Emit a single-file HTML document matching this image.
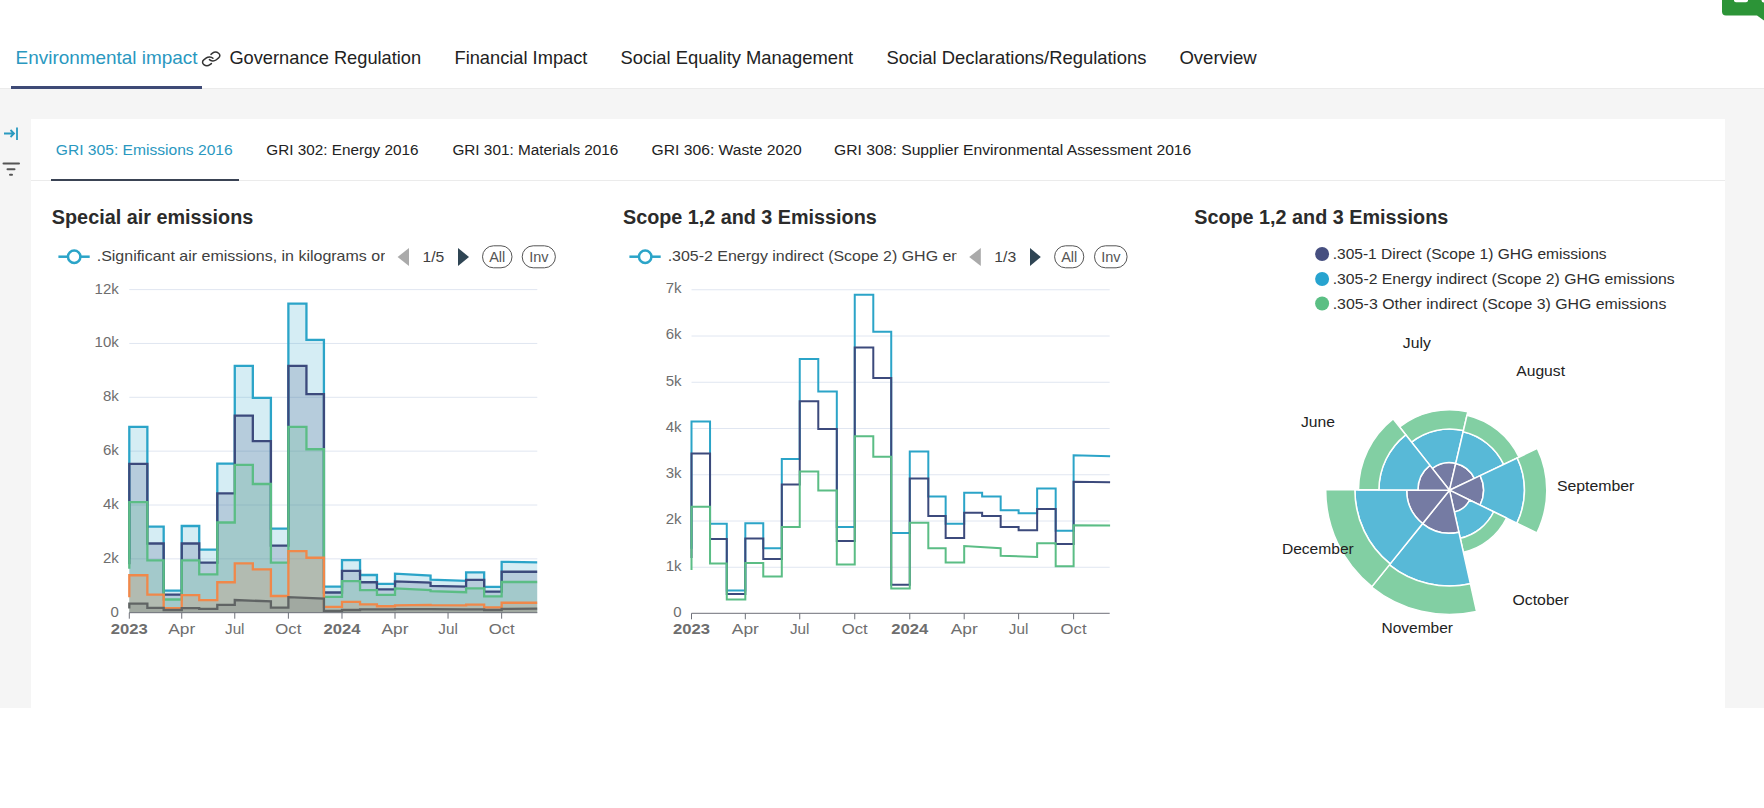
<!DOCTYPE html>
<html><head><meta charset="utf-8"><title>Environmental impact</title>
<style>
html,body{margin:0;padding:0;background:#fff;width:1764px;height:808px;overflow:hidden;}
svg{display:block;font-family:"Liberation Sans",sans-serif;}
.tt{font-size:18.5px;}
.st{font-size:15.5px;}
.ti{font-size:19.5px;font-weight:700;fill:#2b2b2b;}
.lg{font-size:14.5px;fill:#404040;}
.lg3{font-size:15.5px;fill:#2e2e2e;}
.pill{font-size:14.5px;fill:#555;}
.ax{font-size:15.5px;fill:#6e6e6e;}
.axb{font-size:15.5px;fill:#6e6e6e;font-weight:700;}
.ay{font-size:15px;fill:#6e6e6e;}
.pl{font-size:15.5px;fill:#222;}
</style></head>
<body>
<svg width="1764" height="808" viewBox="0 0 1764 808">
<rect x="0" y="88" width="1764" height="620" fill="#f5f5f5"/>
<rect x="0" y="88" width="1764" height="1" fill="#ebebeb"/>
<rect x="31" y="119" width="1694" height="589" fill="#ffffff"/>
<rect x="31" y="180" width="1694" height="1" fill="#ebebeb"/>
<text x="15.6" y="63.7" class="tt" fill="#2a98bf" textLength="182.0" lengthAdjust="spacingAndGlyphs">Environmental impact</text>
<text x="229.4" y="63.7" class="tt" fill="#222" textLength="191.8" lengthAdjust="spacingAndGlyphs">Governance Regulation</text>
<text x="454.5" y="63.7" class="tt" fill="#222" textLength="132.9" lengthAdjust="spacingAndGlyphs">Financial Impact</text>
<text x="620.6" y="63.7" class="tt" fill="#222" textLength="232.6" lengthAdjust="spacingAndGlyphs">Social Equality Management</text>
<text x="886.5" y="63.7" class="tt" fill="#222" textLength="259.9" lengthAdjust="spacingAndGlyphs">Social Declarations/Regulations</text>
<text x="1179.4" y="63.7" class="tt" fill="#222" textLength="77.3" lengthAdjust="spacingAndGlyphs">Overview</text>
<rect x="11" y="86" width="191" height="3" fill="#3e4a76"/>
<g transform="translate(202.5 52.2) scale(0.87 0.675) translate(-2 -2)" fill="none" stroke="#333" stroke-width="1.5" stroke-linecap="round" stroke-linejoin="round"><path vector-effect="non-scaling-stroke" d="M10 13a5 5 0 0 0 7.54.54l3-3a5 5 0 0 0-7.07-7.07l-1.72 1.71"/><path vector-effect="non-scaling-stroke" d="M14 11a5 5 0 0 0-7.54-.54l-3 3a5 5 0 0 0 7.07 7.07l1.71-1.71"/></g>
<text x="55.8" y="154.8" class="st" fill="#2a98bf" textLength="176.9" lengthAdjust="spacingAndGlyphs">GRI 305: Emissions 2016</text>
<text x="266.3" y="154.8" class="st" fill="#222" textLength="152.1" lengthAdjust="spacingAndGlyphs">GRI 302: Energy 2016</text>
<text x="452.4" y="154.8" class="st" fill="#222" textLength="166.0" lengthAdjust="spacingAndGlyphs">GRI 301: Materials 2016</text>
<text x="651.6" y="154.8" class="st" fill="#222" textLength="150.0" lengthAdjust="spacingAndGlyphs">GRI 306: Waste 2020</text>
<text x="834.1" y="154.8" class="st" fill="#222" textLength="357.2" lengthAdjust="spacingAndGlyphs">GRI 308: Supplier Environmental Assessment 2016</text>
<rect x="51" y="179" width="188" height="2" fill="#3a4354"/>
<g stroke="#2a9ac0" stroke-width="1.8" fill="none"><path d="M4 133.5 L14 133.5 M10.5 130 L14 133.5 L10.5 137"/><path d="M17 127.5 L17 140"/></g>
<g stroke="#555" stroke-linecap="round" stroke-width="2"><path d="M3.5 163.5 L19 163.5"/><path d="M7.5 169.2 L14.5 169.2"/><path d="M10 174.8 L12 174.8"/></g>
<path d="M1722 -5 L1764 -5 L1764 20.5 L1757 15.5 L1726 15.5 Q1722 15.5 1722 11.5 Z" fill="#2c9437"/>
<rect x="1734" y="-4" width="14" height="6.2" rx="2" fill="#fff"/>
<rect x="1761.6" y="-4" width="6" height="6.5" rx="2" fill="#fff"/>
<text x="51.8" y="223.6" class="ti" textLength="201.5" lengthAdjust="spacingAndGlyphs">Special air emissions</text>
<text x="623" y="223.6" class="ti" textLength="253.7" lengthAdjust="spacingAndGlyphs">Scope 1,2 and 3 Emissions</text>
<text x="1194.2" y="223.6" class="ti" textLength="254.1" lengthAdjust="spacingAndGlyphs">Scope 1,2 and 3 Emissions</text>
<line x1="58.4" x2="89.7" y1="256.7" y2="256.7" stroke="#2ba4c8" stroke-width="2.5"/>
<circle cx="74.2" cy="256.7" r="6.2" fill="#fff" stroke="#2ba4c8" stroke-width="2.5"/>
<clipPath id="clip1"><rect x="58.4" y="240" width="326.5" height="30"/></clipPath>
<text x="96.7" y="261" class="lg" clip-path="url(#clip1)" textLength="389.2" lengthAdjust="spacingAndGlyphs">.Significant air emissions, in kilograms or metric tonnes</text>
<path d="M409 248 L409 266 L397.6 257 Z" fill="#aaaaaa"/>
<text x="422.5" y="261.5" class="lg" textLength="21.8" lengthAdjust="spacingAndGlyphs">1/5</text>
<path d="M458 248 L458 266 L469 257 Z" fill="#2f4554"/>
<rect x="482.5" y="245.8" width="29.5" height="22" rx="11" fill="none" stroke="#555" stroke-width="1"/>
<text x="497.25" y="262" text-anchor="middle" class="pill">All</text>
<rect x="522.2" y="245.8" width="33.2" height="22" rx="11" fill="none" stroke="#555" stroke-width="1"/>
<text x="538.8" y="262" text-anchor="middle" class="pill">Inv</text>
<line x1="629.4" x2="660.7" y1="256.7" y2="256.7" stroke="#2ba4c8" stroke-width="2.5"/>
<circle cx="645.2" cy="256.7" r="6.2" fill="#fff" stroke="#2ba4c8" stroke-width="2.5"/>
<clipPath id="clip2"><rect x="629.4" y="240" width="327.1" height="30"/></clipPath>
<text x="667.7" y="261" class="lg" clip-path="url(#clip2)" textLength="345.7" lengthAdjust="spacingAndGlyphs">.305-2 Energy indirect (Scope 2) GHG emissions</text>
<path d="M980.8 248 L980.8 266 L969.2 257 Z" fill="#aaaaaa"/>
<text x="994.3" y="261.5" class="lg" textLength="21.9" lengthAdjust="spacingAndGlyphs">1/3</text>
<path d="M1030 248 L1030 266 L1040.8 257 Z" fill="#2f4554"/>
<rect x="1054.6" y="245.8" width="29.2" height="22" rx="11" fill="none" stroke="#555" stroke-width="1"/>
<text x="1069.2" y="262" text-anchor="middle" class="pill">All</text>
<rect x="1094.5" y="245.8" width="32.6" height="22" rx="11" fill="none" stroke="#555" stroke-width="1"/>
<text x="1110.8" y="262" text-anchor="middle" class="pill">Inv</text>
<line x1="129.3" x2="537.3" y1="558.85" y2="558.85" stroke="#e0e6f1" stroke-width="1"/>
<line x1="129.3" x2="537.3" y1="505" y2="505" stroke="#e0e6f1" stroke-width="1"/>
<line x1="129.3" x2="537.3" y1="451.15" y2="451.15" stroke="#e0e6f1" stroke-width="1"/>
<line x1="129.3" x2="537.3" y1="397.3" y2="397.3" stroke="#e0e6f1" stroke-width="1"/>
<line x1="129.3" x2="537.3" y1="343.45" y2="343.45" stroke="#e0e6f1" stroke-width="1"/>
<line x1="129.3" x2="537.3" y1="289.6" y2="289.6" stroke="#e0e6f1" stroke-width="1"/>
<path d="M129.3 558.85 L129.3 426.92 L147.36 426.92 L147.36 526.54 L163.68 526.54 L163.68 590.62 L181.74 590.62 L181.74 526 L199.22 526 L199.22 549.7 L217.29 549.7 L217.29 463.54 L234.77 463.54 L234.77 365.8 L252.83 365.8 L252.83 397.84 L270.9 397.84 L270.9 528.69 L288.38 528.69 L288.38 303.6 L306.44 303.6 L306.44 339.95 L323.92 339.95 L323.92 586.58 L341.99 586.58 L341.99 560.2 L360.05 560.2 L360.05 575 L376.95 575 L376.95 583.89 L395.01 583.89 L395.01 573.66 L430.56 575.54 L430.56 579.58 L466.1 580.93 L466.1 572.31 L484.16 572.31 L484.16 586.85 L501.65 586.85 L501.65 561.81 L537.19 562.35 L537.19 612.7 L129.3 612.7 Z" fill="#2ba4c8" fill-opacity="0.2"/>
<path d="M129.3 558.85 L129.3 426.92 L147.36 426.92 L147.36 526.54 L163.68 526.54 L163.68 590.62 L181.74 590.62 L181.74 526 L199.22 526 L199.22 549.7 L217.29 549.7 L217.29 463.54 L234.77 463.54 L234.77 365.8 L252.83 365.8 L252.83 397.84 L270.9 397.84 L270.9 528.69 L288.38 528.69 L288.38 303.6 L306.44 303.6 L306.44 339.95 L323.92 339.95 L323.92 586.58 L341.99 586.58 L341.99 560.2 L360.05 560.2 L360.05 575 L376.95 575 L376.95 583.89 L395.01 583.89 L395.01 573.66 L430.56 575.54 L430.56 579.58 L466.1 580.93 L466.1 572.31 L484.16 572.31 L484.16 586.85 L501.65 586.85 L501.65 561.81 L537.19 562.35" fill="none" stroke="#2ba4c8" stroke-width="2.3" stroke-linejoin="miter"/>
<path d="M129.3 564.24 L129.3 463.8 L147.36 463.8 L147.36 543.5 L163.68 543.5 L163.68 594.66 L181.74 594.66 L181.74 543.5 L199.22 543.5 L199.22 562.62 L217.29 562.62 L217.29 493.42 L234.77 493.42 L234.77 415.61 L252.83 415.61 L252.83 441.19 L270.9 441.19 L270.9 545.66 L288.38 545.66 L288.38 365.8 L306.44 365.8 L306.44 394.07 L323.92 394.07 L323.92 592.51 L341.99 592.51 L341.99 570.97 L360.05 570.97 L360.05 582.27 L376.95 582.27 L376.95 589.28 L395.01 589.28 L395.01 581.47 L430.56 582.54 L430.56 585.78 L466.1 586.58 L466.1 579.85 L484.16 579.85 L484.16 591.7 L501.65 591.7 L501.65 571.77 L537.19 571.77 L537.19 612.7 L129.3 612.7 Z" fill="#3c4a7c" fill-opacity="0.2"/>
<path d="M129.3 564.24 L129.3 463.8 L147.36 463.8 L147.36 543.5 L163.68 543.5 L163.68 594.66 L181.74 594.66 L181.74 543.5 L199.22 543.5 L199.22 562.62 L217.29 562.62 L217.29 493.42 L234.77 493.42 L234.77 415.61 L252.83 415.61 L252.83 441.19 L270.9 441.19 L270.9 545.66 L288.38 545.66 L288.38 365.8 L306.44 365.8 L306.44 394.07 L323.92 394.07 L323.92 592.51 L341.99 592.51 L341.99 570.97 L360.05 570.97 L360.05 582.27 L376.95 582.27 L376.95 589.28 L395.01 589.28 L395.01 581.47 L430.56 582.54 L430.56 585.78 L466.1 586.58 L466.1 579.85 L484.16 579.85 L484.16 591.7 L501.65 591.7 L501.65 571.77 L537.19 571.77" fill="none" stroke="#3c4a7c" stroke-width="2.3" stroke-linejoin="miter"/>
<path d="M129.3 568.81 L129.3 502.04 L147.36 502.04 L147.36 560.47 L163.68 560.47 L163.68 599.51 L181.74 599.51 L181.74 560.47 L199.22 560.47 L199.22 574.47 L217.29 574.47 L217.29 522.5 L234.77 522.5 L234.77 464.88 L252.83 464.88 L252.83 484 L270.9 484 L270.9 562.62 L288.38 562.62 L288.38 426.92 L306.44 426.92 L306.44 449.27 L323.92 449.27 L323.92 596.81 L341.99 596.81 L341.99 581.2 L360.05 581.2 L360.05 590.08 L376.95 590.08 L376.95 594.93 L395.01 594.93 L395.01 588.47 L430.56 590.08 L430.56 591.16 L466.1 592.24 L466.1 588.47 L484.16 588.47 L484.16 596.28 L501.65 596.28 L501.65 582.01 L537.19 582.01 L537.19 612.7 L129.3 612.7 Z" fill="#5bbd85" fill-opacity="0.2"/>
<path d="M129.3 568.81 L129.3 502.04 L147.36 502.04 L147.36 560.47 L163.68 560.47 L163.68 599.51 L181.74 599.51 L181.74 560.47 L199.22 560.47 L199.22 574.47 L217.29 574.47 L217.29 522.5 L234.77 522.5 L234.77 464.88 L252.83 464.88 L252.83 484 L270.9 484 L270.9 562.62 L288.38 562.62 L288.38 426.92 L306.44 426.92 L306.44 449.27 L323.92 449.27 L323.92 596.81 L341.99 596.81 L341.99 581.2 L360.05 581.2 L360.05 590.08 L376.95 590.08 L376.95 594.93 L395.01 594.93 L395.01 588.47 L430.56 590.08 L430.56 591.16 L466.1 592.24 L466.1 588.47 L484.16 588.47 L484.16 596.28 L501.65 596.28 L501.65 582.01 L537.19 582.01" fill="none" stroke="#5bbd85" stroke-width="2.3" stroke-linejoin="miter"/>
<path d="M129.3 597.35 L129.3 575.27 L147.36 575.27 L147.36 594.66 L163.68 594.66 L163.68 608.12 L181.74 608.12 L181.74 595.2 L199.22 595.2 L199.22 600.05 L217.29 600.05 L217.29 582.27 L234.77 582.27 L234.77 563.43 L252.83 563.43 L252.83 569.35 L270.9 569.35 L270.9 596.01 L288.38 596.01 L288.38 551.04 L306.44 551.04 L306.44 557.77 L323.92 557.77 L323.92 606.78 L341.99 606.78 L341.99 601.93 L360.05 601.93 L360.05 604.35 L376.95 604.35 L376.95 606.24 L395.01 606.24 L395.01 605.43 L430.56 604.89 L430.56 605.16 L466.1 605.43 L466.1 604.62 L484.16 604.62 L484.16 607.32 L501.65 607.32 L501.65 602.74 L537.19 602.74 L537.19 612.7 L129.3 612.7 Z" fill="#f0884a" fill-opacity="0.2"/>
<path d="M129.3 597.35 L129.3 575.27 L147.36 575.27 L147.36 594.66 L163.68 594.66 L163.68 608.12 L181.74 608.12 L181.74 595.2 L199.22 595.2 L199.22 600.05 L217.29 600.05 L217.29 582.27 L234.77 582.27 L234.77 563.43 L252.83 563.43 L252.83 569.35 L270.9 569.35 L270.9 596.01 L288.38 596.01 L288.38 551.04 L306.44 551.04 L306.44 557.77 L323.92 557.77 L323.92 606.78 L341.99 606.78 L341.99 601.93 L360.05 601.93 L360.05 604.35 L376.95 604.35 L376.95 606.24 L395.01 606.24 L395.01 605.43 L430.56 604.89 L430.56 605.16 L466.1 605.43 L466.1 604.62 L484.16 604.62 L484.16 607.32 L501.65 607.32 L501.65 602.74 L537.19 602.74" fill="none" stroke="#f0884a" stroke-width="2.3" stroke-linejoin="miter"/>
<path d="M129.3 608.39 L129.3 603.55 L147.36 603.55 L147.36 607.85 L163.68 607.85 L163.68 610.01 L181.74 610.01 L181.74 608.12 L199.22 608.12 L199.22 608.93 L217.29 608.93 L217.29 604.89 L234.77 604.89 L234.77 600.05 L270.9 601.39 L270.9 607.58 L288.38 607.58 L288.38 597.08 L323.92 598.7 L323.92 610.82 L341.99 610.82 L341.99 610.01 L360.05 610.01 L360.05 609.47 L376.95 609.47 L376.95 609.47 L395.01 609.47 L395.01 609.2 L430.56 609.2 L430.56 609.2 L466.1 609.47 L466.1 609.47 L484.16 609.47 L484.16 610.01 L501.65 610.01 L501.65 608.93 L537.19 608.66 L537.19 612.7 L129.3 612.7 Z" fill="#606464" fill-opacity="0.2"/>
<path d="M129.3 608.39 L129.3 603.55 L147.36 603.55 L147.36 607.85 L163.68 607.85 L163.68 610.01 L181.74 610.01 L181.74 608.12 L199.22 608.12 L199.22 608.93 L217.29 608.93 L217.29 604.89 L234.77 604.89 L234.77 600.05 L270.9 601.39 L270.9 607.58 L288.38 607.58 L288.38 597.08 L323.92 598.7 L323.92 610.82 L341.99 610.82 L341.99 610.01 L360.05 610.01 L360.05 609.47 L376.95 609.47 L376.95 609.47 L395.01 609.47 L395.01 609.2 L430.56 609.2 L430.56 609.2 L466.1 609.47 L466.1 609.47 L484.16 609.47 L484.16 610.01 L501.65 610.01 L501.65 608.93 L537.19 608.66" fill="none" stroke="#606464" stroke-width="2.3" stroke-linejoin="miter"/>
<line x1="129.3" x2="537.3" y1="612.7" y2="612.7" stroke="#6e7079" stroke-width="1"/>
<line x1="129.3" x2="129.3" y1="612.7" y2="618.7" stroke="#6e7079" stroke-width="1"/>
<text x="129.3" y="634" text-anchor="middle" class="axb" textLength="37" lengthAdjust="spacingAndGlyphs">2023</text>
<line x1="181.74" x2="181.74" y1="612.7" y2="618.7" stroke="#6e7079" stroke-width="1"/>
<text x="181.74" y="634" text-anchor="middle" class="ax" textLength="27" lengthAdjust="spacingAndGlyphs">Apr</text>
<line x1="234.77" x2="234.77" y1="612.7" y2="618.7" stroke="#6e7079" stroke-width="1"/>
<text x="234.77" y="634" text-anchor="middle" class="ax" textLength="19.5" lengthAdjust="spacingAndGlyphs">Jul</text>
<line x1="288.38" x2="288.38" y1="612.7" y2="618.7" stroke="#6e7079" stroke-width="1"/>
<text x="288.38" y="634" text-anchor="middle" class="ax" textLength="26" lengthAdjust="spacingAndGlyphs">Oct</text>
<line x1="341.99" x2="341.99" y1="612.7" y2="618.7" stroke="#6e7079" stroke-width="1"/>
<text x="341.99" y="634" text-anchor="middle" class="axb" textLength="37" lengthAdjust="spacingAndGlyphs">2024</text>
<line x1="395.01" x2="395.01" y1="612.7" y2="618.7" stroke="#6e7079" stroke-width="1"/>
<text x="395.01" y="634" text-anchor="middle" class="ax" textLength="27" lengthAdjust="spacingAndGlyphs">Apr</text>
<line x1="448.04" x2="448.04" y1="612.7" y2="618.7" stroke="#6e7079" stroke-width="1"/>
<text x="448.04" y="634" text-anchor="middle" class="ax" textLength="19.5" lengthAdjust="spacingAndGlyphs">Jul</text>
<line x1="501.65" x2="501.65" y1="612.7" y2="618.7" stroke="#6e7079" stroke-width="1"/>
<text x="501.65" y="634" text-anchor="middle" class="ax" textLength="26" lengthAdjust="spacingAndGlyphs">Oct</text>
<text x="118.8" y="616.6" text-anchor="end" class="ay">0</text>
<text x="118.8" y="562.75" text-anchor="end" class="ay">2k</text>
<text x="118.8" y="508.9" text-anchor="end" class="ay">4k</text>
<text x="118.8" y="455.05" text-anchor="end" class="ay">6k</text>
<text x="118.8" y="401.2" text-anchor="end" class="ay">8k</text>
<text x="118.8" y="347.35" text-anchor="end" class="ay">10k</text>
<text x="118.8" y="293.5" text-anchor="end" class="ay">12k</text>
<line x1="691.5" x2="1109.7" y1="567.25" y2="567.25" stroke="#e0e6f1" stroke-width="1"/>
<line x1="691.5" x2="1109.7" y1="521" y2="521" stroke="#e0e6f1" stroke-width="1"/>
<line x1="691.5" x2="1109.7" y1="474.75" y2="474.75" stroke="#e0e6f1" stroke-width="1"/>
<line x1="691.5" x2="1109.7" y1="428.5" y2="428.5" stroke="#e0e6f1" stroke-width="1"/>
<line x1="691.5" x2="1109.7" y1="382.25" y2="382.25" stroke="#e0e6f1" stroke-width="1"/>
<line x1="691.5" x2="1109.7" y1="336" y2="336" stroke="#e0e6f1" stroke-width="1"/>
<line x1="691.5" x2="1109.7" y1="289.75" y2="289.75" stroke="#e0e6f1" stroke-width="1"/>
<path d="M691.5 548.75 L691.5 421.56 L710.04 421.56 L710.04 523.77 L726.78 523.77 L726.78 590.38 L745.32 590.38 L745.32 523.31 L763.26 523.31 L763.26 548.29 L781.8 548.29 L781.8 459.02 L799.74 459.02 L799.74 359.12 L818.28 359.12 L818.28 391.5 L836.81 391.5 L836.81 527.01 L854.75 527.01 L854.75 294.84 L873.29 294.84 L873.29 331.84 L891.23 331.84 L891.23 533.02 L909.77 533.02 L909.77 451.62 L928.31 451.62 L928.31 496.49 L945.65 496.49 L945.65 523.77 L964.19 523.77 L964.19 492.79 L982.13 492.79 L982.13 496.49 L1000.67 496.49 L1000.67 510.36 L1018.61 510.36 L1018.61 513.14 L1037.14 513.14 L1037.14 488.62 L1055.68 488.62 L1055.68 530.71 L1073.62 530.71 L1073.62 455.33 L1110.1 456.25" fill="none" stroke="#2ba4c8" stroke-width="2" stroke-linejoin="miter"/>
<path d="M691.5 558 L691.5 453.48 L710.04 453.48 L710.04 539.04 L726.78 539.04 L726.78 594.08 L745.32 594.08 L745.32 538.58 L763.26 538.58 L763.26 558.92 L781.8 558.92 L781.8 484.46 L799.74 484.46 L799.74 401.21 L818.28 401.21 L818.28 428.96 L836.81 428.96 L836.81 540.89 L854.75 540.89 L854.75 347.56 L873.29 347.56 L873.29 378.09 L891.23 378.09 L891.23 584.83 L909.77 584.83 L909.77 478.45 L928.31 478.45 L928.31 515.91 L945.65 515.91 L945.65 538.11 L964.19 538.11 L964.19 512.67 L982.13 512.67 L982.13 515.91 L1000.67 515.91 L1000.67 527.01 L1018.61 527.01 L1018.61 530.25 L1037.14 530.25 L1037.14 508.98 L1055.68 508.98 L1055.68 544.12 L1073.62 544.12 L1073.62 481.69 L1110.1 482.15" fill="none" stroke="#3c4a7c" stroke-width="2" stroke-linejoin="miter"/>
<path d="M691.5 570.02 L691.5 506.66 L710.04 506.66 L710.04 563.55 L726.78 563.55 L726.78 599.62 L745.32 599.62 L745.32 563.09 L763.26 563.09 L763.26 576.5 L781.8 576.5 L781.8 527.01 L799.74 527.01 L799.74 471.51 L818.28 471.51 L818.28 490.48 L836.81 490.48 L836.81 564.48 L854.75 564.48 L854.75 436.36 L873.29 436.36 L873.29 456.71 L891.23 456.71 L891.23 588.52 L909.77 588.52 L909.77 522.85 L928.31 522.85 L928.31 548.29 L945.65 548.29 L945.65 562.62 L964.19 562.62 L964.19 545.98 L1000.67 548.29 L1000.67 555.69 L1037.14 557.08 L1037.14 543.2 L1055.68 543.2 L1055.68 566.33 L1073.62 566.33 L1073.62 525.16 L1110.1 525.62" fill="none" stroke="#5bbd85" stroke-width="2" stroke-linejoin="miter"/>
<line x1="691.5" x2="1109.7" y1="613.3" y2="613.3" stroke="#6e7079" stroke-width="1"/>
<line x1="691.5" x2="691.5" y1="613.3" y2="619.3" stroke="#6e7079" stroke-width="1"/>
<text x="691.5" y="634" text-anchor="middle" class="axb" textLength="37" lengthAdjust="spacingAndGlyphs">2023</text>
<line x1="745.32" x2="745.32" y1="613.3" y2="619.3" stroke="#6e7079" stroke-width="1"/>
<text x="745.32" y="634" text-anchor="middle" class="ax" textLength="27" lengthAdjust="spacingAndGlyphs">Apr</text>
<line x1="799.74" x2="799.74" y1="613.3" y2="619.3" stroke="#6e7079" stroke-width="1"/>
<text x="799.74" y="634" text-anchor="middle" class="ax" textLength="19.5" lengthAdjust="spacingAndGlyphs">Jul</text>
<line x1="854.75" x2="854.75" y1="613.3" y2="619.3" stroke="#6e7079" stroke-width="1"/>
<text x="854.75" y="634" text-anchor="middle" class="ax" textLength="26" lengthAdjust="spacingAndGlyphs">Oct</text>
<line x1="909.77" x2="909.77" y1="613.3" y2="619.3" stroke="#6e7079" stroke-width="1"/>
<text x="909.77" y="634" text-anchor="middle" class="axb" textLength="37" lengthAdjust="spacingAndGlyphs">2024</text>
<line x1="964.19" x2="964.19" y1="613.3" y2="619.3" stroke="#6e7079" stroke-width="1"/>
<text x="964.19" y="634" text-anchor="middle" class="ax" textLength="27" lengthAdjust="spacingAndGlyphs">Apr</text>
<line x1="1018.61" x2="1018.61" y1="613.3" y2="619.3" stroke="#6e7079" stroke-width="1"/>
<text x="1018.61" y="634" text-anchor="middle" class="ax" textLength="19.5" lengthAdjust="spacingAndGlyphs">Jul</text>
<line x1="1073.62" x2="1073.62" y1="613.3" y2="619.3" stroke="#6e7079" stroke-width="1"/>
<text x="1073.62" y="634" text-anchor="middle" class="ax" textLength="26" lengthAdjust="spacingAndGlyphs">Oct</text>
<text x="681.5" y="616.8" text-anchor="end" class="ay">0</text>
<text x="681.5" y="570.55" text-anchor="end" class="ay">1k</text>
<text x="681.5" y="524.3" text-anchor="end" class="ay">2k</text>
<text x="681.5" y="478.05" text-anchor="end" class="ay">3k</text>
<text x="681.5" y="431.8" text-anchor="end" class="ay">4k</text>
<text x="681.5" y="385.55" text-anchor="end" class="ay">5k</text>
<text x="681.5" y="339.3" text-anchor="end" class="ay">6k</text>
<text x="681.5" y="293.05" text-anchor="end" class="ay">7k</text>
<path d="M1449.5 490.2 L1432.33 468.46 A27.7 27.7 0 0 1 1455.79 463.22 Z" fill="#757ba3" stroke="#fff" stroke-width="1.5" stroke-linejoin="round"/>
<path d="M1432.33 468.46 L1411.57 442.17 A61.2 61.2 0 0 1 1463.4 430.6 L1455.79 463.22 A27.7 27.7 0 0 0 1432.33 468.46 Z" fill="#58b9d7" stroke="#fff" stroke-width="1.5" stroke-linejoin="round"/>
<path d="M1411.57 442.17 L1399.61 427.03 A80.5 80.5 0 0 1 1467.78 411.8 L1463.4 430.6 A61.2 61.2 0 0 0 1411.57 442.17 Z" fill="#82cfa3" stroke="#fff" stroke-width="1.5" stroke-linejoin="round"/>
<path d="M1449.5 490.2 L1455.75 463.42 A27.5 27.5 0 0 1 1474.33 478.39 Z" fill="#757ba3" stroke="#fff" stroke-width="1.5" stroke-linejoin="round"/>
<path d="M1455.75 463.42 L1463.13 431.77 A60 60 0 0 1 1503.68 464.42 L1474.33 478.39 A27.5 27.5 0 0 0 1455.75 463.42 Z" fill="#58b9d7" stroke="#fff" stroke-width="1.5" stroke-linejoin="round"/>
<path d="M1463.13 431.77 L1466.99 415.21 A77 77 0 0 1 1519.03 457.12 L1503.68 464.42 A60 60 0 0 0 1463.13 431.77 Z" fill="#82cfa3" stroke="#fff" stroke-width="1.5" stroke-linejoin="round"/>
<path d="M1449.5 490.2 L1480.2 475.59 A34 34 0 0 1 1480.06 505.1 Z" fill="#757ba3" stroke="#fff" stroke-width="1.5" stroke-linejoin="round"/>
<path d="M1480.2 475.59 L1517.23 457.98 A75 75 0 0 1 1516.92 523.06 L1480.06 505.1 A34 34 0 0 0 1480.2 475.59 Z" fill="#58b9d7" stroke="#fff" stroke-width="1.5" stroke-linejoin="round"/>
<path d="M1517.23 457.98 L1537.36 448.4 A97.3 97.3 0 0 1 1536.96 532.83 L1516.92 523.06 A75 75 0 0 0 1517.23 457.98 Z" fill="#82cfa3" stroke="#fff" stroke-width="1.5" stroke-linejoin="round"/>
<path d="M1449.5 490.2 L1469.64 500.01 A22.4 22.4 0 0 1 1454.38 512.06 Z" fill="#757ba3" stroke="#fff" stroke-width="1.5" stroke-linejoin="round"/>
<path d="M1469.64 500.01 L1493.73 511.76 A49.2 49.2 0 0 1 1460.22 538.22 L1454.38 512.06 A22.4 22.4 0 0 0 1469.64 500.01 Z" fill="#58b9d7" stroke="#fff" stroke-width="1.5" stroke-linejoin="round"/>
<path d="M1493.73 511.76 L1506.58 518.02 A63.5 63.5 0 0 1 1463.34 552.17 L1460.22 538.22 A49.2 49.2 0 0 0 1493.73 511.76 Z" fill="#82cfa3" stroke="#fff" stroke-width="1.5" stroke-linejoin="round"/>
<path d="M1449.5 490.2 L1458.87 532.17 A43 43 0 0 1 1422.53 523.69 Z" fill="#757ba3" stroke="#fff" stroke-width="1.5" stroke-linejoin="round"/>
<path d="M1458.87 532.17 L1470.37 583.7 A95.8 95.8 0 0 1 1389.42 564.82 L1422.53 523.69 A43 43 0 0 0 1458.87 532.17 Z" fill="#58b9d7" stroke="#fff" stroke-width="1.5" stroke-linejoin="round"/>
<path d="M1470.37 583.7 L1476.58 611.51 A124.3 124.3 0 0 1 1371.54 587.01 L1389.42 564.82 A95.8 95.8 0 0 0 1470.37 583.7 Z" fill="#82cfa3" stroke="#fff" stroke-width="1.5" stroke-linejoin="round"/>
<path d="M1449.5 490.2 L1422.66 523.54 A42.8 42.8 0 0 1 1406.7 490 Z" fill="#757ba3" stroke="#fff" stroke-width="1.5" stroke-linejoin="round"/>
<path d="M1422.66 523.54 L1390.17 563.88 A94.6 94.6 0 0 1 1354.9 489.75 L1406.7 490 A42.8 42.8 0 0 0 1422.66 523.54 Z" fill="#58b9d7" stroke="#fff" stroke-width="1.5" stroke-linejoin="round"/>
<path d="M1390.17 563.88 L1371.85 586.62 A123.8 123.8 0 0 1 1325.7 489.61 L1354.9 489.75 A94.6 94.6 0 0 0 1390.17 563.88 Z" fill="#82cfa3" stroke="#fff" stroke-width="1.5" stroke-linejoin="round"/>
<path d="M1449.5 490.2 L1417.9 490.05 A31.6 31.6 0 0 1 1429.91 465.4 Z" fill="#757ba3" stroke="#fff" stroke-width="1.5" stroke-linejoin="round"/>
<path d="M1417.9 490.05 L1378.9 489.87 A70.6 70.6 0 0 1 1405.74 434.79 L1429.91 465.4 A31.6 31.6 0 0 0 1417.9 490.05 Z" fill="#58b9d7" stroke="#fff" stroke-width="1.5" stroke-linejoin="round"/>
<path d="M1378.9 489.87 L1358.5 489.77 A91 91 0 0 1 1393.1 418.79 L1405.74 434.79 A70.6 70.6 0 0 0 1378.9 489.87 Z" fill="#82cfa3" stroke="#fff" stroke-width="1.5" stroke-linejoin="round"/>
<text x="1402.8" y="348.3" class="pl" textLength="28.0" lengthAdjust="spacingAndGlyphs">July</text>
<text x="1516.3" y="376.3" class="pl" textLength="48.7" lengthAdjust="spacingAndGlyphs">August</text>
<text x="1300.9" y="427.1" class="pl" textLength="34.0" lengthAdjust="spacingAndGlyphs">June</text>
<text x="1556.9" y="491.0" class="pl" textLength="77.5" lengthAdjust="spacingAndGlyphs">September</text>
<text x="1281.9" y="554.0" class="pl" textLength="71.9" lengthAdjust="spacingAndGlyphs">December</text>
<text x="1512.5" y="605.3" class="pl" textLength="56.3" lengthAdjust="spacingAndGlyphs">October</text>
<text x="1381.5" y="632.8" class="pl" textLength="71.5" lengthAdjust="spacingAndGlyphs">November</text>
<circle cx="1322.1" cy="254.0" r="7" fill="#464f80"/>
<text x="1332.7" y="259.3" class="lg3" textLength="273.9" lengthAdjust="spacingAndGlyphs">.305-1 Direct (Scope 1) GHG emissions</text>
<circle cx="1322.1" cy="279.0" r="7" fill="#27a3cf"/>
<text x="1332.7" y="284.3" class="lg3" textLength="342.0" lengthAdjust="spacingAndGlyphs">.305-2 Energy indirect (Scope 2) GHG emissions</text>
<circle cx="1322.1" cy="303.5" r="7" fill="#5bbf84"/>
<text x="1332.7" y="308.8" class="lg3" textLength="333.7" lengthAdjust="spacingAndGlyphs">.305-3 Other indirect (Scope 3) GHG emissions</text>
</svg>
</body></html>
